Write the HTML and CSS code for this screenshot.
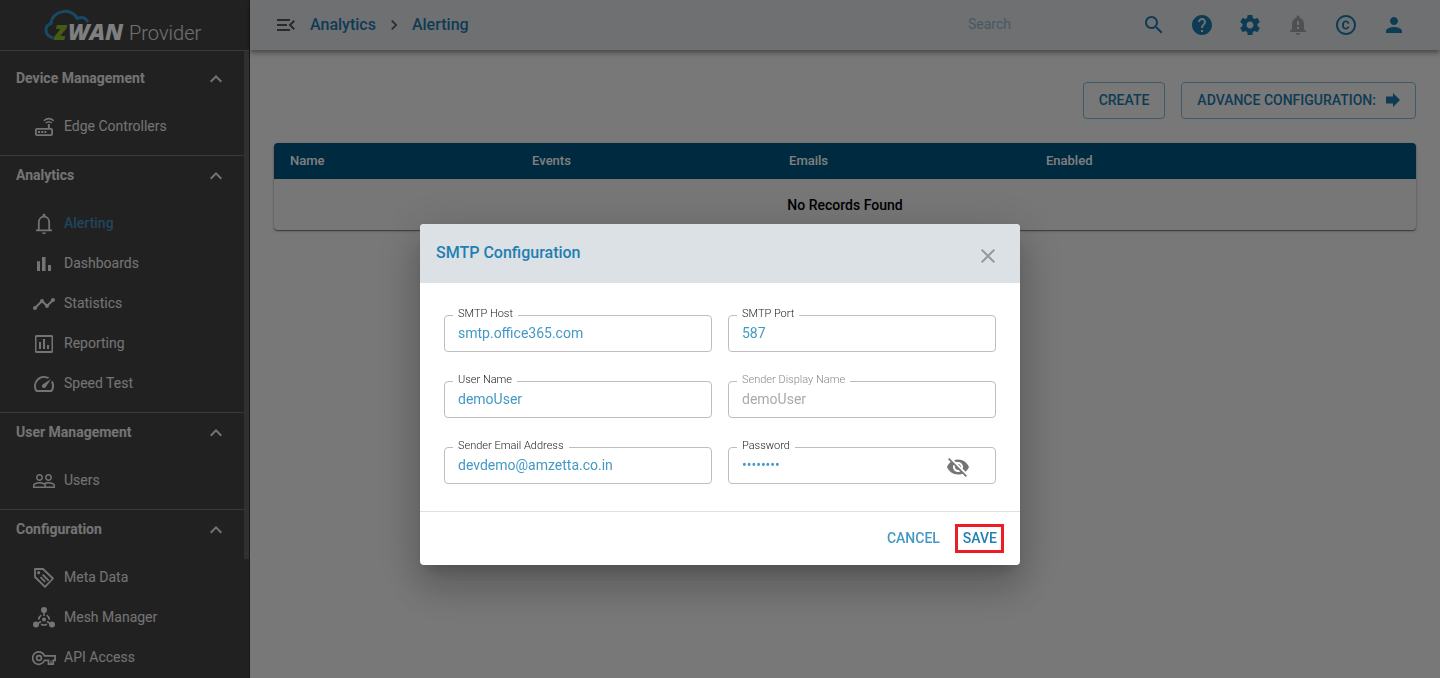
FILE: index.html
```html
<!DOCTYPE html>
<html lang="en">
<head>
<meta charset="utf-8">
<title>zWAN Provider - Alerting</title>
<link rel="stylesheet" href="styles.css">
</head>
<body>
<div class="app">
  <aside class="sidebar">
    <div class="brand">
      <svg class="logo" width="180" height="42" viewBox="0 0 180 42" role="img" aria-label="zWAN Provider">
        <path d="M9 30C0 27 0 18 7 15.500C8 2 28 -1 33.500 10.500Q40 7.500 44 14" fill="none" stroke="#2c94c8" stroke-width="3"/>
        <text class="logo-z" x="10" y="32">z</text>
        <text class="logo-wan" x="24" y="32">WAN</text>
        <text class="logo-provider" x="85" y="32">Provider</text>
      </svg>
    </div>
    <div class="sidebar-body">
      <nav class="nav">
        <section class="nav-section">
          <button class="nav-head" type="button">Device Management<svg class="chevron" viewBox="0 0 24 24"><path d="M12 8l-6 6 1.410 1.410L12 10.830l4.590 4.580L18 14z"/></svg></button>
          <ul class="nav-list">
            <li><a class="nav-item" href="#"><svg viewBox="0 0 24 24"><path fill-rule="evenodd" d="M19 13h-1.200V9h-1.900v4H5c-1.100 0-2 .9-2 2v4c0 1.100.9 2 2 2h14c1.100 0 2-.9 2-2v-4c0-1.100-.9-2-2-2zm.2 6.200H4.800v-4.400h14.400zM6 16h2v2H6zm3.200 0h2v2h-2zm3.200 0h2v2h-2z"/><path d="M11.800 5.800q5-4.400 10 0M13.700 8q3.100-2.600 6.200 0" fill="none" stroke="currentColor" stroke-width="1.500"/></svg>Edge Controllers</a></li>
          </ul>
        </section>
        <section class="nav-section">
          <button class="nav-head" type="button">Analytics<svg class="chevron" viewBox="0 0 24 24"><path d="M12 8l-6 6 1.410 1.410L12 10.830l4.590 4.580L18 14z"/></svg></button>
          <ul class="nav-list">
            <li><a class="nav-item active" href="#"><svg viewBox="0 0 24 24"><path d="M10 20.500h4c0 1.100-.9 1.500-2 1.500s-2-.4-2-1.500zM10.600 4V3.200a1.400 1.400 0 0 1 2.800 0V4z"/><path d="M6.800 18v-7.500C6.800 7 9 4.700 12 4.700s5.200 2.300 5.200 5.800V18M4 18.300h16" fill="none" stroke="currentColor" stroke-width="1.800"/></svg>Alerting</a></li>
            <li><a class="nav-item" href="#"><svg viewBox="0 0 24 24"><path d="M5 9.200h3V19H5zM10 5h3.500v14H10zM16 13h3v6h-3z"/></svg>Dashboards</a></li>
            <li><a class="nav-item" href="#"><svg viewBox="0 0 24 24"><path d="M23 8c0 1.100-.9 2-2 2-.18 0-.35-.02-.51-.07l-3.560 3.550c.05.16.07.34.07.52 0 1.100-.9 2-2 2s-2-.9-2-2c0-.18.02-.36.07-.52l-2.550-2.550c-.16.05-.34.07-.52.07s-.36-.02-.52-.07l-4.550 4.560c.05.16.07.33.07.51 0 1.100-.9 2-2 2s-2-.9-2-2 .9-2 2-2c.18 0 .35.02.51.07l4.560-4.550C8.020 9.360 8 9.180 8 9c0-1.100.9-2 2-2s2 .9 2 2c0 .18-.02.36-.07.52l2.550 2.550c.16-.05.34-.07.52-.07s.36.02.52.07l3.550-3.560C19.020 8.350 19 8.180 19 8c0-1.100.9-2 2-2s2 .9 2 2z"/></svg>Statistics</a></li>
            <li><a class="nav-item" href="#"><svg viewBox="0 0 24 24"><path d="M9 17H7v-7h2v7zm4 0h-2V7h2v10zm4 0h-2v-4h2v4zm2.500 2.100h-15V5h15v14.100zm0-16.100h-15c-.83 0-1.500.67-1.500 1.500v15c0 .83.67 1.500 1.500 1.500h15c.83 0 1.500-.67 1.500-1.500v-15c0-.83-.67-1.500-1.500-1.500z"/></svg>Reporting</a></li>
            <li><a class="nav-item" href="#"><svg viewBox="0 0 24 24"><path d="M20.380 8.570l-1.230 1.850a8 8 0 0 1-.22 7.580H5.070A8 8 0 0 1 15.580 6.850l1.850-1.230A10 10 0 0 0 3.350 19a2 2 0 0 0 1.720 1h13.850a2 2 0 0 0 1.740-1 10 10 0 0 0-.27-10.440zM10.590 15.410a2 2 0 0 0 2.830 0l5.660-8.490-8.490 5.660a2 2 0 0 0 0 2.830z"/></svg>Speed Test</a></li>
          </ul>
        </section>
        <section class="nav-section">
          <button class="nav-head" type="button">User Management<svg class="chevron" viewBox="0 0 24 24"><path d="M12 8l-6 6 1.410 1.410L12 10.830l4.590 4.580L18 14z"/></svg></button>
          <ul class="nav-list">
            <li><a class="nav-item" href="#"><svg viewBox="0 0 24 24"><path d="M16.500 13c-1.200 0-3.070.34-4.500 1-1.430-.67-3.300-1-4.500-1C5.330 13 1 14.080 1 16.250V19h22v-2.750c0-2.170-4.330-3.250-6.500-3.250zm-4 4.500h-10v-1.250c0-.54 2.560-1.750 5-1.750s5 1.210 5 1.750v1.250zm9 0H14v-1.250c0-.46-.2-.86-.52-1.220.88-.3 1.960-.53 3.020-.53 2.440 0 5 1.210 5 1.750v1.250zM7.500 12c1.930 0 3.500-1.570 3.500-3.500S9.430 5 7.500 5 4 6.570 4 8.500 5.570 12 7.500 12zm0-5.500c1.100 0 2 .9 2 2s-.9 2-2 2-2-.9-2-2 .9-2 2-2zm9 5.500c1.930 0 3.500-1.570 3.500-3.500S18.430 5 16.500 5 13 6.570 13 8.500s1.570 3.500 3.500 3.500zm0-5.500c1.100 0 2 .9 2 2s-.9 2-2 2-2-.9-2-2 .9-2 2-2z"/></svg>Users</a></li>
          </ul>
        </section>
        <section class="nav-section">
          <button class="nav-head" type="button">Configuration<svg class="chevron" viewBox="0 0 24 24"><path d="M12 8l-6 6 1.410 1.410L12 10.830l4.590 4.580L18 14z"/></svg></button>
          <ul class="nav-list">
            <li><a class="nav-item" href="#"><svg viewBox="0 0 24 24"><g fill="none" stroke="currentColor" stroke-width="1.800" stroke-linejoin="round"><path d="M3 3h8L21 12.500 13 20.800 3 11z"/><path d="M10.700 8.700l6 6M8.500 11.200l4.700 4.700" /></g><circle cx="6.700" cy="6.700" r="1.600"/></svg>Meta Data</a></li>
            <li><a class="nav-item" href="#"><svg viewBox="0 0 24 24"><circle cx="12" cy="4" r="3"/><circle cx="4" cy="18.500" r="3"/><circle cx="20" cy="18.500" r="3"/><circle cx="12" cy="13.500" r="2"/><path d="M12 5v5M5 18l4-2.500M19 18l-4-2.500M9.300 9.200q-2.500 1.600-2.600 4.400M14.700 9.200q2.500 1.600 2.600 4.400M9 18.200q3 1.500 6 0" fill="none" stroke="currentColor" stroke-width="1.600"/></svg>Mesh Manager</a></li>
            <li><a class="nav-item" href="#"><svg viewBox="0 0 24 24"><g fill="none" stroke="currentColor" stroke-width="1.700"><path d="M12.600 9.900A6.200 6.200 0 1 0 12.600 14.300H16.500V18.200H21.200V14.300H23.100V9.900z"/><circle cx="7" cy="12" r="2.400"/><path d="M19 18v-3.600" stroke-width="1.200"/></g></svg>API Access</a></li>
          </ul>
        </section>
      </nav>
      <div class="scroll-track"><div class="scroll-thumb"></div></div>
    </div>
  </aside>

  <div class="page">
    <header class="topbar">
      <button class="icon-btn menu-btn" type="button" aria-label="Collapse menu"><svg viewBox="0 0 24 24"><path d="M3 18h13v-2H3v2zm0-5h10v-2H3v2zm0-7v2h13V6H3zm18 9.590L17.420 12 21 8.410 19.590 7l-5 5 5 5L21 15.590z"/></svg></button>
      <div class="crumbs">
        <a href="#">Analytics</a>
        <svg viewBox="0 0 24 24"><path d="M10 6L8.590 7.410 13.170 12l-4.580 4.590L10 18l6-6z"/></svg>
        <a href="#">Alerting</a>
      </div>
      <input class="search" type="search" placeholder="Search" aria-label="Search">
      <div class="actions">
        <button class="icon-btn" type="button" aria-label="Search"><svg viewBox="0 0 24 24"><path d="M15.500 14h-.79l-.28-.27C15.410 12.590 16 11.110 16 9.500 16 5.910 13.090 3 9.500 3S3 5.910 3 9.500 5.910 16 9.500 16c1.610 0 3.090-.59 4.230-1.570l.27.28v.79l5 4.990L20.490 19l-4.990-5zm-6 0C7.010 14 5 11.990 5 9.500S7.010 5 9.500 5 14 7.010 14 9.500 11.990 14 9.500 14z"/></svg></button>
        <button class="icon-btn" type="button" aria-label="Help"><svg viewBox="0 0 24 24"><path d="M12 2C6.480 2 2 6.480 2 12s4.480 10 10 10 10-4.480 10-10S17.520 2 12 2zm1 17h-2v-2h2v2zm2.070-7.750l-.9.920C13.450 12.900 13 13.500 13 15h-2v-.5c0-1.100.45-2.100 1.170-2.830l1.240-1.260c.37-.36.59-.86.59-1.410 0-1.100-.9-2-2-2s-2 .9-2 2H8c0-2.210 1.790-4 4-4s4 1.790 4 4c0 .88-.36 1.680-.93 2.250z"/></svg></button>
        <button class="icon-btn" type="button" aria-label="Settings"><svg viewBox="0 0 24 24"><path d="M19.430 12.980c.04-.32.07-.64.07-.98s-.03-.66-.07-.98l2.110-1.650c.19-.15.24-.42.12-.64l-2-3.460c-.12-.22-.39-.3-.61-.22l-2.490 1c-.52-.4-1.080-.73-1.690-.98l-.38-2.650C14.460 2.180 14.250 2 14 2h-4c-.25 0-.46.18-.49.42l-.38 2.650c-.61.25-1.170.59-1.690.98l-2.490-1c-.23-.09-.49 0-.61.22l-2 3.460c-.13.22-.07.49.12.64l2.110 1.650c-.04.32-.07.65-.07.98s.03.66.07.98l-2.110 1.650c-.19.15-.24.42-.12.64l2 3.460c.12.22.39.3.61.22l2.490-1c.52.4 1.080.73 1.690.98l.38 2.650c.03.24.24.42.49.42h4c.25 0 .46-.18.49-.42l.38-2.650c.61-.25 1.170-.59 1.690-.98l2.490 1c.23.09.49 0 .61-.22l2-3.460c.12-.22.07-.49-.12-.64l-2.110-1.650zM12 15.500c-1.930 0-3.500-1.570-3.500-3.500s1.570-3.500 3.500-3.500 3.500 1.570 3.500 3.500-1.570 3.500-3.500 3.500z"/></svg></button>
        <button class="icon-btn muted" type="button" aria-label="Notifications"><svg viewBox="0 0 24 24"><path d="M18 16v-5c0-3.070-1.640-5.640-4.500-6.320V4c0-.83-.67-1.500-1.500-1.500s-1.500.67-1.500 1.500v.68C7.630 5.360 6 7.920 6 11v5l-2 2v1h16v-1l-2-2zm-5 0h-2v-2h2v2zm0-4h-2V8h2v4zm-1 10c1.100 0 2-.9 2-2h-4c0 1.100.89 2 2 2z"/></svg></button>
        <button class="icon-btn" type="button" aria-label="Copyright"><svg viewBox="0 0 24 24"><path d="M10.080 10.860c.05-.33.16-.62.3-.87s.34-.46.59-.62c.24-.15.54-.22.91-.23.23.01.44.05.63.13.2.09.38.21.52.36s.25.33.34.53.13.42.14.64h1.790c-.02-.47-.11-.9-.28-1.290s-.4-.73-.7-1.010-.66-.5-1.080-.66-.88-.23-1.390-.23c-.65 0-1.220.11-1.700.34s-.88.53-1.200.92-.56.84-.71 1.360S8 11.290 8 11.870v.27c0 .58.08 1.120.23 1.640s.39.97.71 1.350.72.690 1.200.91 1.050.34 1.700.34c.47 0 .91-.08 1.320-.23s.77-.36 1.080-.63.56-.58.74-.94.290-.74.300-1.150h-1.790c-.01.21-.06.4-.15.58s-.21.33-.36.46-.32.23-.52.3c-.19.07-.39.09-.6.100-.36-.01-.66-.08-.89-.23-.25-.16-.45-.37-.59-.62s-.25-.55-.3-.88-.08-.67-.08-1v-.27c0-.35.03-.68.080-1.010zM12 2C6.480 2 2 6.480 2 12s4.480 10 10 10 10-4.480 10-10S17.520 2 12 2zm0 18c-4.410 0-8-3.590-8-8s3.590-8 8-8 8 3.590 8 8-3.590 8-8 8z"/></svg></button>
        <button class="icon-btn" type="button" aria-label="Account"><svg viewBox="0 0 24 24"><path d="M12 12c2.210 0 4-1.790 4-4s-1.790-4-4-4-4 1.790-4 4 1.790 4 4 4zm0 2c-2.670 0-8 1.340-8 4v2h16v-2c0-2.660-5.330-4-8-4z"/></svg></button>
      </div>
    </header>

    <main class="content">
      <div class="toolbar">
        <button class="outline-btn" type="button">CREATE</button>
        <button class="outline-btn" type="button">ADVANCE CONFIGURATION:<svg width="14" height="14" viewBox="0 0 14 14"><path d="M0 3.500h7V0l7 7-7 7v-3.500H0z"/></svg></button>
      </div>
      <table class="records">
        <thead>
          <tr><th class="col-name">Name</th><th class="col-mid">Events</th><th class="col-mid">Emails</th><th>Enabled</th></tr>
        </thead>
        <tbody>
          <tr><td colspan="4">No Records Found</td></tr>
        </tbody>
      </table>
    </main>
  </div>
</div>

<div class="backdrop">
  <form class="dialog" role="dialog" aria-labelledby="dialog-title">
    <div class="dialog-head">
      <h2 id="dialog-title">SMTP Configuration</h2>
      <button class="close-btn" type="button" aria-label="Close"><svg viewBox="0 0 24 24"><path d="M19 6.410L17.590 5 12 10.590 6.410 5 5 6.410 10.590 12 5 17.590 6.410 19 12 13.410 17.590 19 19 17.590 13.410 12z"/></svg></button>
    </div>
    <div class="dialog-body">
      <fieldset class="field"><legend><label for="host">SMTP Host</label></legend><input id="host" type="text" value="smtp.office365.com"></fieldset>
      <fieldset class="field"><legend><label for="port">SMTP Port</label></legend><input id="port" type="text" value="587"></fieldset>
      <fieldset class="field"><legend><label for="user">User Name</label></legend><input id="user" type="text" value="demoUser"></fieldset>
      <fieldset class="field" disabled><legend><label for="display">Sender Display Name</label></legend><input id="display" type="text" value="demoUser"></fieldset>
      <fieldset class="field"><legend><label for="email">Sender Email Address</label></legend><input id="email" type="text" value="devdemo@amzetta.co.in"></fieldset>
      <fieldset class="field"><legend><label for="password">Password</label></legend>
        <div class="password-row">
          <input id="password" type="password" value="password">
          <button class="eye-btn" type="button" aria-label="Show password"><svg viewBox="0 0 24 24"><path d="M12 7c2.760 0 5 2.240 5 5 0 .65-.13 1.260-.36 1.830l2.920 2.920c1.510-1.260 2.700-2.890 3.430-4.750-1.730-4.390-6-7.500-11-7.500-1.400 0-2.740.25-3.980.7l2.160 2.160C10.740 7.130 11.350 7 12 7zM2 4.270l2.280 2.280.46.46C3.080 8.300 1.780 10.020 1 12c1.730 4.390 6 7.500 11 7.500 1.550 0 3.030-.3 4.380-.84l.42.42L19.730 22 21 20.730 3.270 3 2 4.270zM7.530 9.800l1.550 1.550c-.05.21-.08.43-.08.65 0 1.660 1.340 3 3 3 .22 0 .44-.03.65-.08l1.550 1.550c-.67.33-1.410.53-2.200.53-2.760 0-5-2.240-5-5 0-.79.2-1.530.53-2.200zm4.310-.78l3.150 3.150.02-.16c0-1.660-1.340-3-3-3l-.17.01z"/></svg></button>
        </div>
      </fieldset>
    </div>
    <div class="dialog-foot">
      <button class="text-btn" type="button">CANCEL</button>
      <button class="text-btn save" type="submit">SAVE</button>
    </div>
  </form>
</div>
</body>
</html>
```

FILE: styles.css
```css
* { box-sizing: border-box; }

body {
  margin: 0;
  font-family: Roboto, "Liberation Sans", sans-serif;
  font-size: 14px;
  background: #f0f0f0;
}

button, input { font: inherit; }

button {
  padding: 0;
  border: 0;
  background: none;
  color: inherit;
}

a { text-decoration: none; color: inherit; }

svg { fill: currentColor; flex: none; }

.app { display: flex; height: 100vh; overflow: hidden; }

/* Sidebar */
.sidebar {
  width: 250px;
  flex: none;
  display: flex;
  flex-direction: column;
  background: #424242;
  color: #fff;
  border-right: 1px solid #303030;
}

.brand {
  padding: 8px 0 0 44px;
  height: 51px;
  border-bottom: 1px solid #757575;
}

.logo { display: block; }
.logo text { font-family: "Open Sans", sans-serif; font-style: italic; font-weight: 800; }
.logo .logo-z { fill: #8cb82b; font-size: 26px; }
.logo .logo-wan { fill: #fff; font-size: 23px; }
.logo .logo-provider { fill: #e0e0e0; font-family: Roboto, sans-serif; font-style: normal; font-weight: 300; font-size: 20px; }

.sidebar-body { flex: 1; min-height: 0; display: flex; }
.nav { flex: 1; overflow: hidden; padding-top: 8px; color: #e8e8e8; }
.nav-section + .nav-section { border-top: 1px solid #757575; }

.nav-head {
  width: 100%;
  height: 38px;
  padding: 0 16px;
  display: flex;
  align-items: center;
  justify-content: space-between;
  font-weight: 700;
  text-align: left;
}

.chevron { width: 24px; height: 24px; margin-top: 2px; }
.nav-list { list-style: none; margin: 0; padding: 9px 0; }

.nav-item {
  height: 40px;
  padding-left: 32px;
  display: flex;
  align-items: center;
  gap: 8px;
}

.nav-item svg { width: 24px; height: 24px; margin-top: 2px; }
.nav-item.active { color: #3f8db8; font-weight: 500; }
.nav-item.active svg { color: #e8e8e8; }

.scroll-track { width: 5px; }
.scroll-thumb { height: 81%; background: #606060; }

/* Top bar */
.page { flex: 1; min-width: 0; }

.topbar {
  height: 50px;
  padding: 0 34px 0 24px;
  display: flex;
  align-items: center;
  background: #dce1e5;
  box-shadow: 0 2px 4px -1px rgba(0, 0, 0, .3), 0 4px 5px rgba(0, 0, 0, .2);
  color: #1c77a8;
}

.icon-btn { width: 24px; height: 24px; }
.icon-btn svg { display: block; width: 24px; height: 24px; }
.menu-btn { color: #555; }
.muted { color: #a0a0a0; }

.crumbs {
  flex: 1;
  padding-left: 12px;
  display: flex;
  align-items: center;
  gap: 8px;
  font-size: 16px;
  font-weight: 500;
}

.crumbs a { padding-bottom: 2px; }
.crumbs svg { width: 20px; height: 20px; color: #555; }

.search {
  width: 150px;
  margin-right: 24px;
  padding: 0 0 2px;
  border: 0;
  outline: 0;
  background: none;
}

.search::placeholder { color: #8fb1c4; opacity: 1; }
.actions { display: flex; gap: 24px; }

/* Content */
.content { padding: 32px 24px; }
.toolbar { display: flex; justify-content: flex-end; gap: 16px; }

.outline-btn {
  height: 37px;
  padding: 0 15px 2px;
  display: flex;
  align-items: center;
  gap: 10px;
  border: 1px solid #7fb5d3;
  border-radius: 4px;
  color: #1c77a8;
  font-weight: 500;
}

.records {
  width: 100%;
  margin-top: 24px;
  border-spacing: 0;
  table-layout: fixed;
  border-radius: 4px;
  overflow: hidden;
  background: #eee;
  box-shadow: 0 1px 1px rgba(0, 0, 0, .4), 0 1px 3px rgba(0, 0, 0, .25);
}

.records th {
  height: 36px;
  padding: 0 16px 2px;
  background: #00557f;
  color: #fff;
  font-size: 13px;
  font-weight: 500;
  text-align: left;
}

.col-name { width: 21.2%; }
.col-mid { width: 22.5%; }

.records td {
  height: 51px;
  padding: 0;
  text-align: center;
  font-weight: 500;
  color: #000;
}

/* Dialog */
.backdrop {
  position: fixed;
  inset: 0;
  display: flex;
  align-items: center;
  justify-content: center;
  padding-top: 111px;
  background: rgba(0, 0, 0, .5);
}

.dialog {
  width: 600px;
  border-radius: 4px;
  overflow: hidden;
  background: #fff;
  box-shadow: 0 11px 15px -7px rgba(0, 0, 0, .2), 0 24px 38px 3px rgba(0, 0, 0, .14), 0 9px 46px 8px rgba(0, 0, 0, .12);
}

.dialog-head {
  height: 59px;
  padding: 0 20px 2px 16px;
  display: flex;
  align-items: center;
  justify-content: space-between;
  background: #dce1e5;
}

.dialog-head h2 { margin: 0; font-size: 16px; font-weight: 500; color: #1f7fb2; }
.close-btn { padding-top: 6px; color: #999; }
.close-btn svg { display: block; width: 24px; height: 24px; }

.dialog-body {
  padding: 25px 24px 27px;
  display: grid;
  grid-template-columns: 1fr 1fr;
  gap: 22px 16px;
}

.field {
  min-width: 0;
  height: 44px;
  margin: 0;
  padding: 0 8px;
  border: 1px solid #bdbdbd;
  border-radius: 4px;
  color: #222;
}

.field legend {
  padding: 0 5px 3px;
  font-size: 11px;
  font-weight: 300;
  line-height: 11px;
}

.field label { display: block; }

.field input {
  display: block;
  width: 100%;
  height: 29px;
  padding: 0 5px 7px;
  border: 0;
  outline: 0;
  background: none;
  color: #4399c5;
}

.field:disabled { color: #888; }
.field:disabled input { color: #aaa; }
.password-row { display: flex; }
.password-row input { flex: 1; min-width: 0; }
.eye-btn { height: 26px; margin-right: 17px; color: #757575; }
.eye-btn svg { display: block; width: 24px; height: 24px; }

.dialog-foot {
  height: 54px;
  padding: 0 16px;
  display: flex;
  align-items: center;
  justify-content: flex-end;
  gap: 15px;
  border-top: 1px solid #e0e0e0;
}

.text-btn { padding-bottom: 2px; font-weight: 500; color: #4399c5; }

.save {
  height: 29px;
  padding: 0 4px 2px 5px;
  border: 3px solid #ed1c24;
  color: #1f7fb2;
}
```
